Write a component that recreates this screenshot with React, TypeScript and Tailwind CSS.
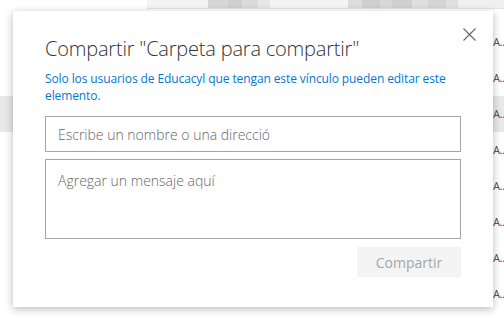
import React from "react";

const rows = [0, 1, 2, 3, 4, 5, 6, 7];

export default function App() {
  return (
    <div
      className="relative w-[504px] h-[318px] overflow-hidden bg-white"
      style={{ fontFamily: '"Open Sans", "Noto Sans", sans-serif' }}
    >
      {/* background page */}
      <div className="flex flex-col">
        <div className="flex h-[9px]">
          <div className="w-[147px] bg-white" />
          <div className="flex-1 flex bg-[#f4f4f4] border-b border-[#e2e2e2]">
            <div className="w-[61px]" />
            <div className="w-[62px] flex">
              <div className="w-[20px] bg-[#d6d6d6]" />
              <div className="w-[14px] bg-[#cfcfcf]" />
              <div className="w-[16px] bg-[#dadada]" />
              <div className="w-[12px] bg-[#e6e6e6]" />
            </div>
            <div className="w-[78px]" />
            <div className="flex-1 flex">
              <div className="w-[14px] bg-[#dcdcdc]" />
              <div className="w-[18px] bg-[#d2cdd2]" />
              <div className="w-[12px] bg-[#d8d8d8]" />
              <div className="w-[20px] bg-[#cfd0cf]" />
              <div className="w-[16px] bg-[#dedede]" />
              <div className="w-[18px] bg-[#d4d4d4]" />
              <div className="w-[12px] bg-[#e0e0e0]" />
              <div className="flex-1 bg-[#f0f0f0]" />
            </div>
          </div>
        </div>
        <div className="h-[15px]" />
        {rows.map((r) => (
          <div
            key={r}
            className={`h-[36px] flex items-center justify-end ${r === 2 ? "bg-[#e9e9e9]" : ""}`}
          >
            <span
              className="w-[11px] overflow-hidden whitespace-nowrap text-[11px] tracking-[-0.5px] text-[#555]"
              style={{ fontFamily: '"Noto Sans", sans-serif' }}
            >
              A..
            </span>
          </div>
        ))}
      </div>

      {/* dialog */}
      <div className="absolute left-[13px] top-[11px] w-[480px] h-[296px] bg-white shadow-[0_2px_8px_rgba(0,0,0,0.28)] flex flex-col px-[32px]">
        <button className="absolute right-[17px] top-[17px] w-[13px] h-[13px] text-[#666]">
          <svg viewBox="0 0 13 13" width="13" height="13" fill="none" stroke="currentColor" strokeWidth="1.1">
            <path d="M0.5 0.5 L12.5 12.5 M12.5 0.5 L0.5 12.5" />
          </svg>
        </button>
        <h1 className="mt-[25px] text-[20px] leading-[26px] font-light text-[#333] whitespace-nowrap tracking-[-0.2px]">
          Compartir "Carpeta para compartir"
        </h1>
        <p className="mt-[8px] text-[12px] leading-[17px] text-[#0078d4] tracking-[-0.1px]">
          Solo los usuarios de Educacyl que tengan este vínculo pueden editar este elemento.
        </p>
        <div className="mt-[12px] h-[36px] border border-[#a6a6a6] flex items-center pl-[12px]">
          <span className="text-[14px] font-light text-[#666]">Escribe un nombre o una direcció</span>
        </div>
        <div className="mt-[7px] h-[80px] border border-[#a6a6a6] pl-[12px] pt-[8px]">
          <span className="text-[14px] font-light text-[#666]">Agregar un mensaje aquí</span>
        </div>
        <div className="mt-[8px] flex justify-end">
          <div className="w-[104px] h-[30px] bg-[#f4f4f4] flex items-center justify-center text-[14px] text-[#a6a6a6]">
            Compartir
          </div>
        </div>
      </div>
    </div>
  );
}
